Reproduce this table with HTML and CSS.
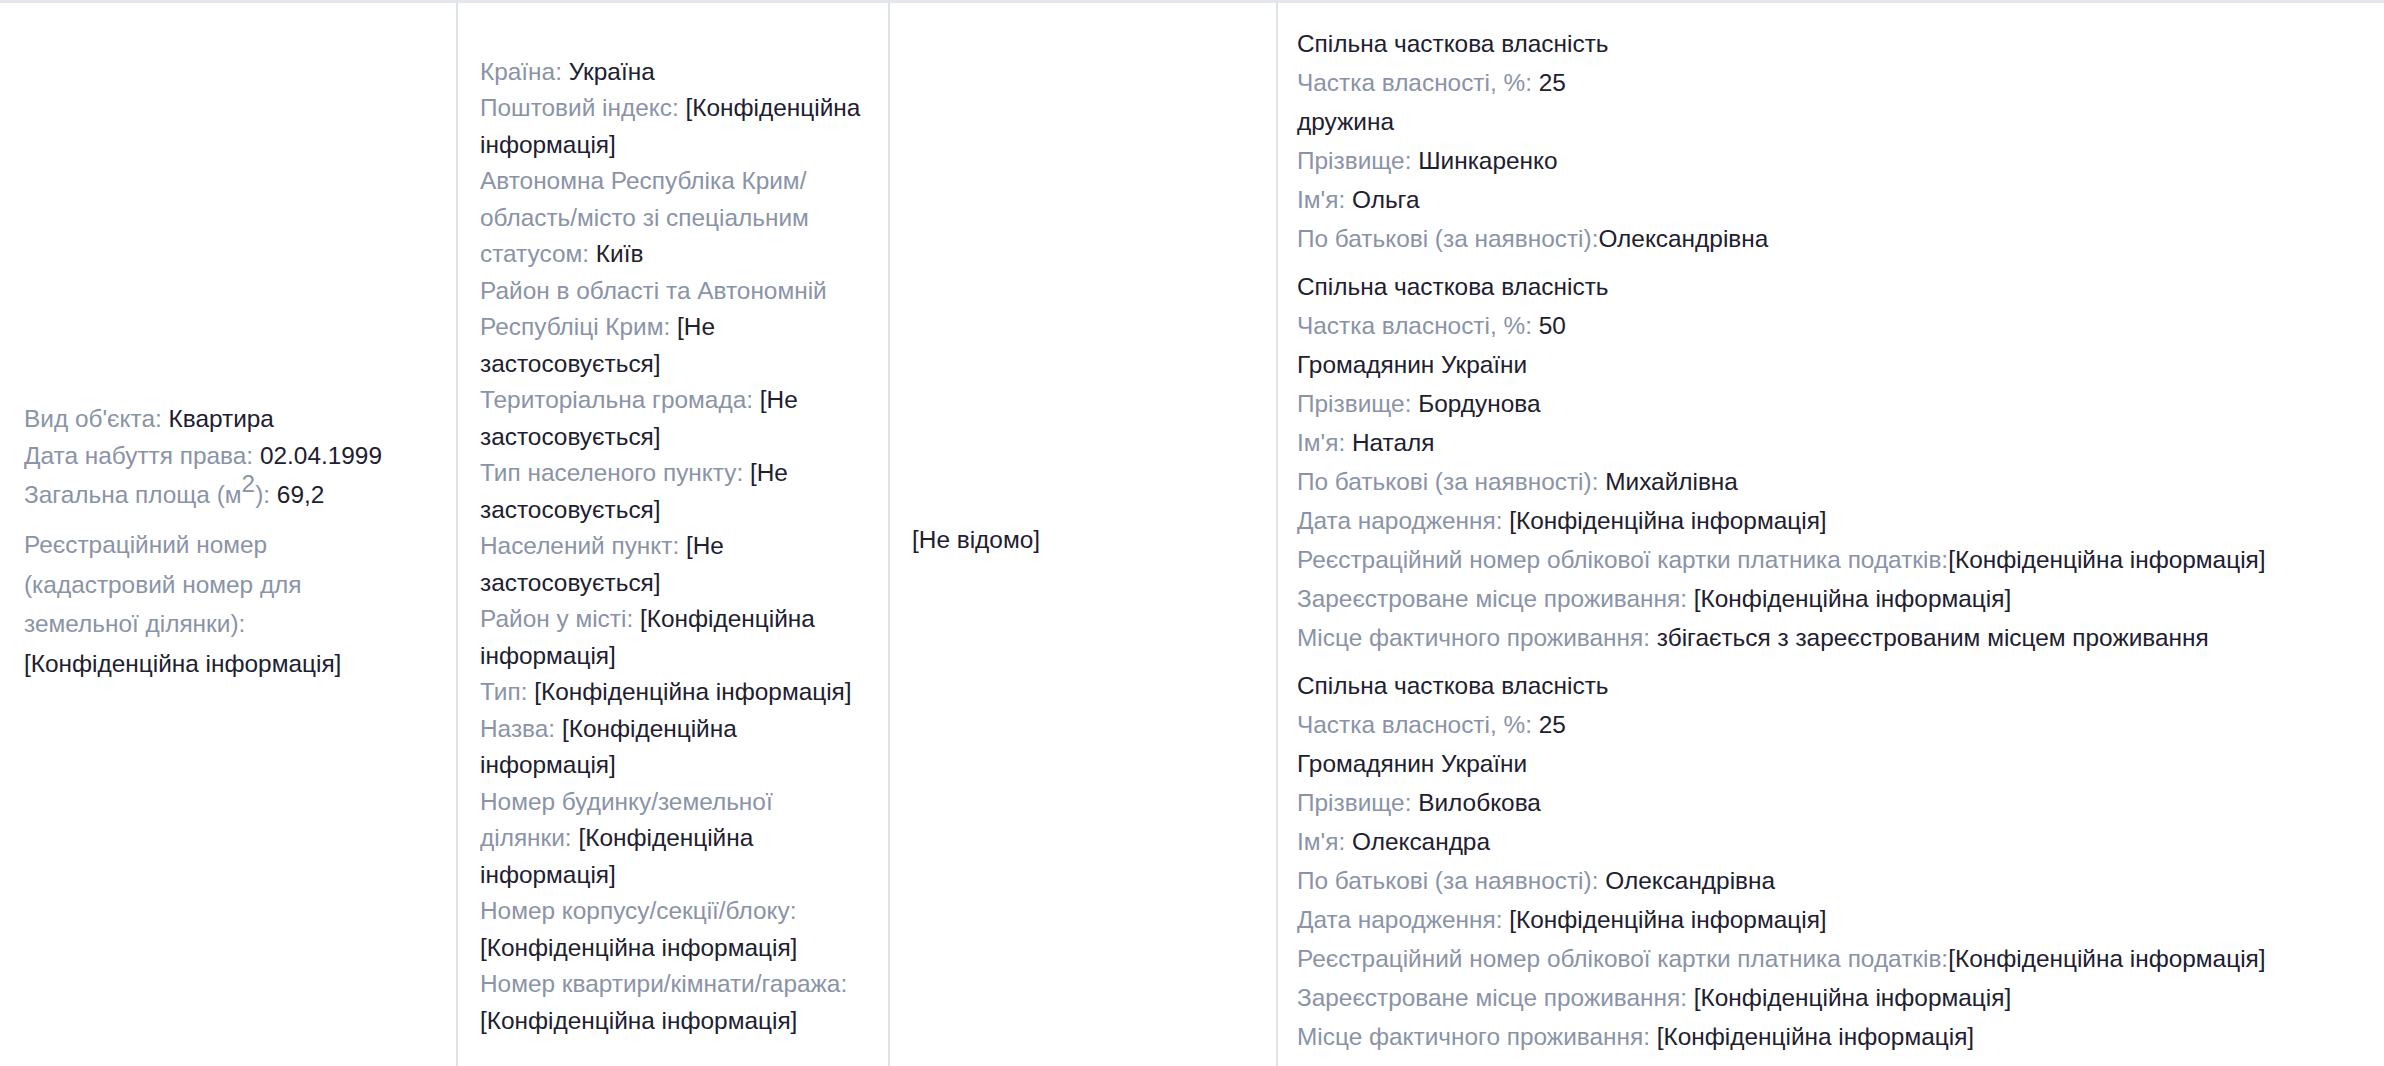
FILE: index.html
```html
<!DOCTYPE html>
<html lang="uk">
<head>
<meta charset="utf-8">
<title>Декларація — об'єкти нерухомості</title>
<link rel="stylesheet" href="styles.css">
</head>
<body>
<div class="decl-row">
  <div class="cell cell-object">
    <div class="fields">
      <div class="field"><span class="lbl">Вид об'єкта: </span><span class="val">Квартира</span></div>
      <div class="field"><span class="lbl">Дата набуття права: </span><span class="val">02.04.1999</span></div>
      <div class="field"><span class="lbl">Загальна площа (м<sup class="sup">2</sup>): </span><span class="val">69,2</span></div>
    </div>
    <div class="cadastral"><span class="lbl">Реєстраційний номер (кадастровий номер для земельної ділянки): </span><span class="val">[Конфіденційна інформація]</span></div>
  </div>

  <div class="cell cell-address">
    <div class="field"><span class="lbl">Країна: </span><span class="val">Україна</span></div>
    <div class="field"><span class="lbl">Поштовий індекс: </span><span class="val">[Конфіденційна інформація]</span></div>
    <div class="field"><span class="lbl">Автономна Республіка Крим/<wbr>область/місто зі спеціальним статусом: </span><span class="val">Київ</span></div>
    <div class="field"><span class="lbl">Район в області та Автономній Республіці Крим: </span><span class="val">[Не застосовується]</span></div>
    <div class="field"><span class="lbl">Територіальна громада: </span><span class="val">[Не застосовується]</span></div>
    <div class="field"><span class="lbl">Тип населеного пункту: </span><span class="val">[Не застосовується]</span></div>
    <div class="field"><span class="lbl">Населений пункт: </span><span class="val">[Не застосовується]</span></div>
    <div class="field"><span class="lbl">Район у місті: </span><span class="val">[Конфіденційна інформація]</span></div>
    <div class="field"><span class="lbl">Тип: </span><span class="val">[Конфіденційна інформація]</span></div>
    <div class="field"><span class="lbl">Назва: </span><span class="val">[Конфіденційна інформація]</span></div>
    <div class="field"><span class="lbl">Номер будинку/земельної ділянки: </span><span class="val">[Конфіденційна інформація]</span></div>
    <div class="field"><span class="lbl">Номер корпусу/секції/блоку: </span><span class="val">[Конфіденційна інформація]</span></div>
    <div class="field"><span class="lbl">Номер квартири/кімнати/гаража: </span><span class="val">[Конфіденційна інформація]</span></div>
  </div>

  <div class="cell cell-value">
    <div class="field"><span class="val">[Не відомо]</span></div>
  </div>

  <div class="cell cell-owners">
    <div class="owner">
      <div class="line val">Спільна часткова власність</div>
      <div class="line"><span class="lbl">Частка власності, %: </span><span class="val">25</span></div>
      <div class="line val">дружина</div>
      <div class="line"><span class="lbl">Прізвище: </span><span class="val">Шинкаренко</span></div>
      <div class="line"><span class="lbl">Ім'я: </span><span class="val">Ольга</span></div>
      <div class="line"><span class="lbl">По батькові (за наявності):</span><span class="val">Олександрівна</span></div>
    </div>
    <div class="owner">
      <div class="line val">Спільна часткова власність</div>
      <div class="line"><span class="lbl">Частка власності, %: </span><span class="val">50</span></div>
      <div class="line val">Громадянин України</div>
      <div class="line"><span class="lbl">Прізвище: </span><span class="val">Бордунова</span></div>
      <div class="line"><span class="lbl">Ім'я: </span><span class="val">Наталя</span></div>
      <div class="line"><span class="lbl">По батькові (за наявності): </span><span class="val">Михайлівна</span></div>
      <div class="line"><span class="lbl">Дата народження: </span><span class="val">[Конфіденційна інформація]</span></div>
      <div class="line"><span class="lbl">Реєстраційний номер облікової картки платника податків:</span><span class="val">[Конфіденційна інформація]</span></div>
      <div class="line"><span class="lbl">Зареєстроване місце проживання: </span><span class="val">[Конфіденційна інформація]</span></div>
      <div class="line"><span class="lbl">Місце фактичного проживання: </span><span class="val">збігається з зареєстрованим місцем проживання</span></div>
    </div>
    <div class="owner">
      <div class="line val">Спільна часткова власність</div>
      <div class="line"><span class="lbl">Частка власності, %: </span><span class="val">25</span></div>
      <div class="line val">Громадянин України</div>
      <div class="line"><span class="lbl">Прізвище: </span><span class="val">Вилобкова</span></div>
      <div class="line"><span class="lbl">Ім'я: </span><span class="val">Олександра</span></div>
      <div class="line"><span class="lbl">По батькові (за наявності): </span><span class="val">Олександрівна</span></div>
      <div class="line"><span class="lbl">Дата народження: </span><span class="val">[Конфіденційна інформація]</span></div>
      <div class="line"><span class="lbl">Реєстраційний номер облікової картки платника податків:</span><span class="val">[Конфіденційна інформація]</span></div>
      <div class="line"><span class="lbl">Зареєстроване місце проживання: </span><span class="val">[Конфіденційна інформація]</span></div>
      <div class="line"><span class="lbl">Місце фактичного проживання: </span><span class="val">[Конфіденційна інформація]</span></div>
    </div>
  </div>
</div>
</body>
</html>
```

FILE: styles.css
```css
html, body {
  margin: 0;
  padding: 0;
  background: #ffffff;
}

body {
  font-family: "Liberation Sans", Arial, sans-serif;
  font-size: 24.4px;
  color: #1d2030;
}

.decl-row {
  display: grid;
  grid-template-columns: 456px 432px 388px 1fr;
  border-top: 3px solid #e3e6ea;
}

.cell {
  display: flex;
  flex-direction: column;
  justify-content: center;
  padding: 21px 24px;
}

.cell + .cell {
  border-left: 2px solid #dee2e6;
}

.lbl {
  color: #8a93a7;
}

.val {
  color: #1d2030;
}

.field {
  line-height: 36.5px;
}

.sup {
  font-size: 100%;
  line-height: 20px;
  vertical-align: 11px;
}

.cell-object {
  padding: 26px 56px 21px 24px;
}

.cadastral {
  margin-top: 11px;
  line-height: 39.7px;
}

.cell-address {
  padding: 34px 24px 21px 22px;
}

.cell-value {
  padding: 21px 22px;
}

.cell-owners {
  padding: 21px 19px;
}

.line {
  line-height: 39px;
}

.owner + .owner {
  margin-top: 9px;
}
```
